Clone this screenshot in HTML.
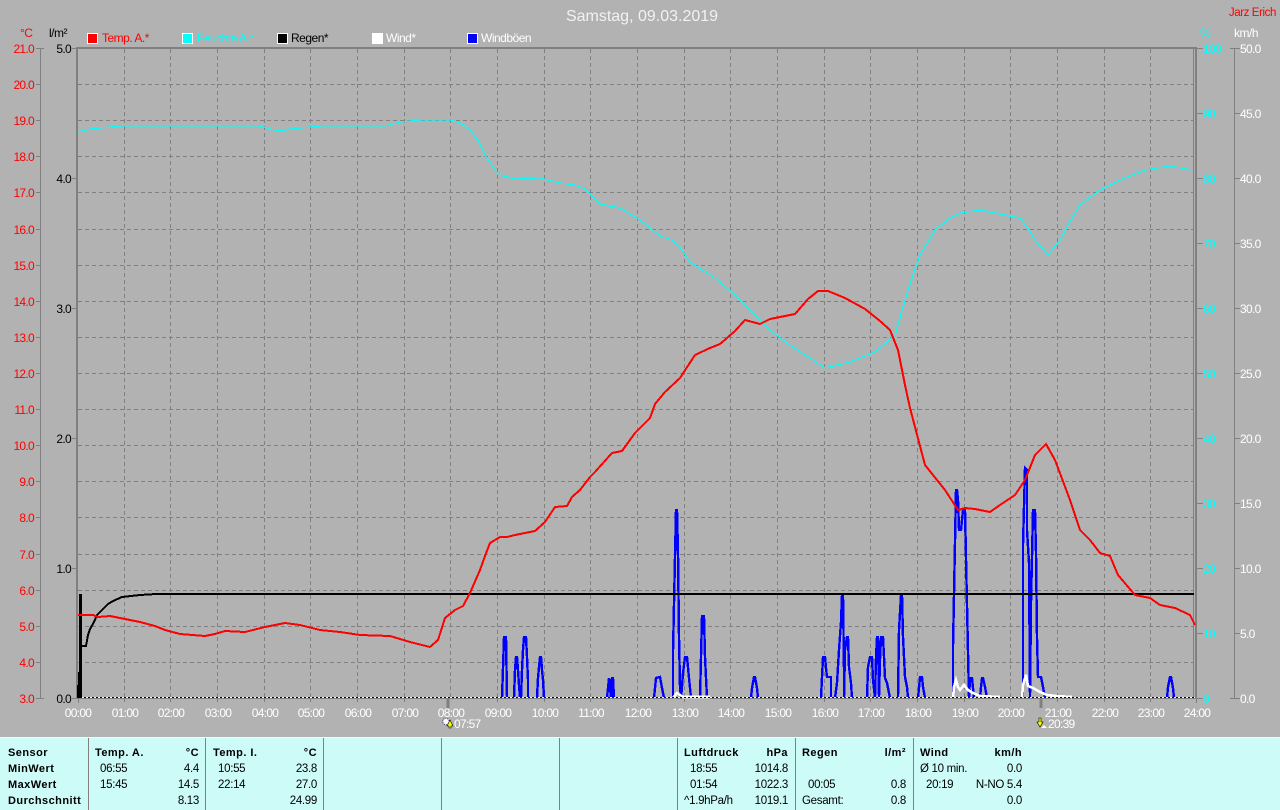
<!DOCTYPE html>
<html><head><meta charset="utf-8"><style>
html,body{margin:0;padding:0;background:#b2b2b2;width:1280px;height:810px;overflow:hidden}
svg{display:block;position:absolute;left:0;top:0}
text{font-family:"Liberation Sans",sans-serif;font-size:12px;letter-spacing:-.7px}
.lg text{letter-spacing:-.5px}
.r{text-anchor:end}.m{text-anchor:middle}
.w{fill:#fff}.red{fill:#f00}.c{fill:#0ff}.k{fill:#000}
.t text{font-size:11.5px;letter-spacing:-.3px;fill:#000}
.t .b{font-weight:bold;font-size:11px;letter-spacing:.45px}
.l{fill:none;stroke-linejoin:miter;shape-rendering:crispEdges}
.g{stroke:#808080;stroke-width:1;stroke-dasharray:4 3;shape-rendering:crispEdges;fill:none}
.a{stroke:#808080;fill:none;shape-rendering:crispEdges}
.bl polyline{fill:none;stroke:#00f;stroke-width:2.4;stroke-linejoin:miter;shape-rendering:crispEdges}
</style></head><body>
<svg width="1280" height="810" viewBox="0 0 1280 810">
<rect width="1280" height="810" fill="#b2b2b2"/>
<text x="642" y="21" class="m" fill="#f2f2f2" style="font-size:16px;letter-spacing:0">Samstag, 09.03.2019</text>
<text x="1276" y="16" class="r red" style="font-size:11.5px;letter-spacing:-.4px">Jarz Erich</text>
<g class="lg">
<text x="20" y="37" class="red">°C</text>
<text x="49" y="37" class="k">l/m²</text>
<text x="1200" y="37" class="c">%</text>
<text x="1234" y="37" class="w">km/h</text>
</g>
<!-- legend -->
<g stroke="#fff" stroke-width="1" shape-rendering="crispEdges">
<rect x="87.5" y="33.5" width="10" height="10" fill="#f00"/>
<rect x="182.5" y="33.5" width="10" height="10" fill="#0ff"/>
<rect x="277.5" y="33.5" width="10" height="10" fill="#000"/>
<rect x="372.5" y="33.5" width="10" height="10" fill="#fff"/>
<rect x="467.5" y="33.5" width="10" height="10" fill="#00f"/>
</g>
<g class="lg">
<text x="102" y="42" class="red">Temp. A.*</text>
<text x="197" y="42" class="c">Feuchte A.*</text>
<text x="291" y="42" class="k">Regen*</text>
<text x="386" y="42" class="w">Wind*</text>
<text x="481" y="42" class="w">Windböen</text>
</g>
<!-- horizontal grid -->
<path class="g" d="M78 84.5H1194M78 120.5H1194M78 156.5H1194M78 192.5H1194M78 229.5H1194M78 265.5H1194M78 301.5H1194M78 337.5H1194M78 373.5H1194M78 409.5H1194M78 445.5H1194M78 481.5H1194M78 517.5H1194M78 554.5H1194M78 590.5H1194M78 626.5H1194M78 662.5H1194"/>
<!-- vertical grid -->
<path class="g" d="M124.5 49V698M170.5 49V698M217.5 49V698M264.5 49V698M310.5 49V698M357.5 49V698M404.5 49V698M450.5 49V698M497.5 49V698M544.5 49V698M590.5 49V698M637.5 49V698M684.5 49V698M730.5 49V698M777.5 49V698M824.5 49V698M870.5 49V698M917.5 49V698M964.5 49V698M1010.5 49V698M1057.5 49V698M1104.5 49V698M1150.5 49V698"/>
<path class="a" d="M1193.5 49V698"/>
<!-- axes -->
<path class="a" stroke-width="2" d="M76 48H1197"/>
<path class="a" stroke-width="2" d="M77 47V699"/>
<path class="a" stroke-width="2" d="M1196 47V699"/>
<path class="a" d="M77 698.5H1197"/>
<path class="a" d="M40.5 48V698M36 48.5H44M36 698.5H44M36 84.5H40M36 120.5H40M36 156.5H40M36 192.5H40M36 229.5H40M36 265.5H40M36 301.5H40M36 337.5H40M36 373.5H40M36 409.5H40M36 445.5H40M36 481.5H40M36 517.5H40M36 554.5H40M36 590.5H40M36 626.5H40M36 662.5H40"/>
<path class="a" d="M72 48.5H77M72 178.5H77M72 308.5H77M72 438.5H77M72 568.5H77M72 698.5H77"/>
<path class="a" d="M1197 48.5H1203M1197 113.5H1203M1197 178.5H1203M1197 243.5H1203M1197 308.5H1203M1197 373.5H1203M1197 438.5H1203M1197 503.5H1203M1197 568.5H1203M1197 633.5H1203M1197 698.5H1203"/>
<path class="a" d="M1234.5 48V698M1230 48.5H1240M1230 698.5H1240M1234 113.5H1240M1234 178.5H1240M1234 243.5H1240M1234 308.5H1240M1234 373.5H1240M1234 438.5H1240M1234 503.5H1240M1234 568.5H1240M1234 633.5H1240"/>
<path class="a" d="M78.5 699V703M124.5 699V702M170.5 699V702M217.5 699V702M264.5 699V702M310.5 699V702M357.5 699V702M404.5 699V702M497.5 699V702M544.5 699V702M590.5 699V702M637.5 699V702M684.5 699V702M730.5 699V702M777.5 699V702M824.5 699V702M870.5 699V702M917.5 699V702M964.5 699V702M1010.5 699V702M1057.5 699V702M1104.5 699V702M1150.5 699V702M1196.5 699V703"/>
<path stroke="#808080" stroke-width="3" d="M448 697V708M1041 697V708" shape-rendering="crispEdges"/>
<!-- left temp labels -->
<g class="red">
<text x="34" y="53" class="r">21.0</text><text x="34" y="89" class="r">20.0</text><text x="34" y="125" class="r">19.0</text><text x="34" y="161" class="r">18.0</text><text x="34" y="197" class="r">17.0</text><text x="34" y="234" class="r">16.0</text><text x="34" y="270" class="r">15.0</text><text x="34" y="306" class="r">14.0</text><text x="34" y="342" class="r">13.0</text><text x="34" y="378" class="r">12.0</text><text x="34" y="414" class="r">11.0</text><text x="34" y="450" class="r">10.0</text><text x="34" y="486" class="r">9.0</text><text x="34" y="522" class="r">8.0</text><text x="34" y="559" class="r">7.0</text><text x="34" y="595" class="r">6.0</text><text x="34" y="631" class="r">5.0</text><text x="34" y="667" class="r">4.0</text><text x="34" y="703" class="r">3.0</text>
</g>
<g class="k">
<text x="71" y="53" class="r">5.0</text><text x="71" y="183" class="r">4.0</text><text x="71" y="313" class="r">3.0</text><text x="71" y="443" class="r">2.0</text><text x="71" y="573" class="r">1.0</text><text x="71" y="703" class="r">0.0</text>
</g>
<g class="c">
<text x="1203" y="53">100</text><text x="1203" y="118">90</text><text x="1203" y="183">80</text><text x="1203" y="248">70</text><text x="1203" y="313">60</text><text x="1203" y="378">50</text><text x="1203" y="443">40</text><text x="1203" y="508">30</text><text x="1203" y="573">20</text><text x="1203" y="638">10</text><text x="1203" y="703">0</text>
</g>
<g class="w">
<text x="1240" y="53">50.0</text><text x="1240" y="118">45.0</text><text x="1240" y="183">40.0</text><text x="1240" y="248">35.0</text><text x="1240" y="313">30.0</text><text x="1240" y="378">25.0</text><text x="1240" y="443">20.0</text><text x="1240" y="508">15.0</text><text x="1240" y="573">10.0</text><text x="1240" y="638">5.0</text><text x="1240" y="703">0.0</text>
</g>
<g class="w">
<text x="78" y="717" class="m">00:00</text><text x="125" y="717" class="m">01:00</text><text x="171" y="717" class="m">02:00</text><text x="218" y="717" class="m">03:00</text><text x="265" y="717" class="m">04:00</text><text x="311" y="717" class="m">05:00</text><text x="358" y="717" class="m">06:00</text><text x="405" y="717" class="m">07:00</text><text x="451" y="717" class="m">08:00</text><text x="498" y="717" class="m">09:00</text><text x="545" y="717" class="m">10:00</text><text x="591" y="717" class="m">11:00</text><text x="638" y="717" class="m">12:00</text><text x="685" y="717" class="m">13:00</text><text x="731" y="717" class="m">14:00</text><text x="778" y="717" class="m">15:00</text><text x="825" y="717" class="m">16:00</text><text x="871" y="717" class="m">17:00</text><text x="918" y="717" class="m">18:00</text><text x="965" y="717" class="m">19:00</text><text x="1011" y="717" class="m">20:00</text><text x="1058" y="717" class="m">21:00</text><text x="1105" y="717" class="m">22:00</text><text x="1151" y="717" class="m">23:00</text><text x="1197" y="717" class="m">24:00</text>
<text x="454" y="728">07:57</text><text x="1048" y="728">20:39</text>
</g>
<!-- sun / moon markers -->
<circle cx="446" cy="721.5" r="3.2" fill="#fff" stroke="#336" stroke-width="1" stroke-dasharray="1 1"/>
<path d="M450 720L453 726H451V728H449V726H447Z" fill="#ff0" stroke="#000" stroke-width=".6"/>
<path d="M1039 718H1041V722H1043L1040 727L1037 722H1039Z" fill="#ff0" stroke="#000" stroke-width=".6"/>
<path d="M1041 728L1044 725L1047 728Z" fill="#fff"/>
<!-- humidity -->
<polyline class="l" stroke="#0ff" stroke-width="1.2" points="78,132 90,129 100,128 120,126 260,126 270,129 280,131 290,129 300,128 320,126 385,126 400,122 420,120 450,120 460,123 470,130 478,140 485,155 495,170 500,175 515,179 540,178 560,183 575,185 585,189 600,204 620,208 640,220 660,236 672,240 680,247 690,262 715,278 735,295 750,310 770,330 790,345 810,358 825,368 850,362 875,352 895,335 905,300 912,278 920,255 935,230 950,218 960,213 980,210 1000,214 1020,218 1028,228 1035,240 1048,255 1060,240 1072,218 1080,205 1100,190 1120,180 1145,170 1170,166 1192,170"/>
<!-- gusts -->
<g class="bl">
<polyline points="502,698 503,668 504,637 506,637 507,698"/>
<polyline points="514,698 515,670 516,657 517,657 518,670 519,685 520,698"/>
<polyline points="521,698 522,670 523,650 524,637 526,637 527,657 528,680 528,698"/>
<polyline points="537,698 538,678 539,667 540,657 541,657 542,670 543,680 544,698"/>
<polyline points="607,698 608,688 609,678 610,688 611,698 612,678 613,678 614,698"/>
<polyline points="654,698 656,678 660,677 662,688 664,698"/>
<polyline points="673,698 673,652 674,604 675,557 676,510 677,510 678,553 679,637 680,687 681,698 682,687 683,673 685,657 687,657 689,678 691,698"/>
<polyline points="700,698 701,657 702,616 704,616 705,657 706,678 707,698"/>
<polyline points="751,698 752,688 754,677 755,677 757,688 758,698"/>
<polyline points="821,698 822,677 823,657 825,657 826,668 827,677 831,677 831,698"/>
<polyline points="835,698 837,683 839,650 841,622 842,595 843,595 844,670 844,698 845,650 847,637 848,637 849,667 851,683 852,698"/>
<polyline points="867,698 868,667 870,657 872,657 873,680 875,698 876,657 877,637 878,637 879,697 880,660 881,637 883,637 884,657 885,678 887,683 890,698"/>
<polyline points="898,698 899,630 901,595 902,595 903,637 905,677 907,687 908,698"/>
<polyline points="918,698 919,688 920,677 922,677 923,687 925,698"/>
<polyline points="953,698 953,647 955,542 956,490 957,490 958,500 959,530 961,530 962,520 963,510 965,510 966,558 967,605 968,652 969,698 970,678 972,678 974,698"/>
<polyline points="980,698 981,687 982,678 983,678 985,687 987,698"/>
<polyline points="1023,698 1023,545 1025,468 1027,470 1027,530 1029,563 1030,698 1031,603 1032,557 1033,510 1035,510 1036,553 1037,637 1038,677 1041,677 1043,687 1045,698"/>
<polyline points="1167,698 1168,687 1170,677 1171,677 1173,688 1174,698"/>
</g>
<!-- wind -->
<polyline class="l" stroke="#fff" stroke-width="2.6" points="673,698 677,693 683,697 710,697"/>
<polyline class="l" stroke="#fff" stroke-width="2.6" points="953,698 954,687 956,680 958,687 960,690 964,685 968,690 973,693 980,696 1000,697"/>
<polyline class="l" stroke="#fff" stroke-width="2.6" points="1022,698 1023,685 1026,675 1028,686 1033,688 1040,692 1047,695 1056,696 1072,697"/>
<!-- baseline -->
<path d="M78 697.5H1195" stroke="#000" stroke-width="1" shape-rendering="crispEdges"/>
<path d="M78 697.5H1195" stroke="#fff" stroke-width="1" stroke-dasharray="2 2" shape-rendering="crispEdges"/>
<!-- rain -->
<rect x="77" y="685" width="2" height="13" fill="#000"/>
<rect x="78" y="672" width="2" height="26" fill="#000"/>
<rect x="79" y="594" width="3" height="104" fill="#000"/>
<polyline class="l" stroke="#000" stroke-width="2" points="82,646 86,646 88,635 90,629 94,622 97,615 102,610 108,604 113,601 122,597 140,595 156,594 1194,594"/>
<!-- temp -->
<polyline class="l" stroke="#f00" stroke-width="2" points="78,615 93,615 98,617 110,616 120,618 140,622 155,626 165,630 180,634 205,636 215,634 225,631 245,632 265,627 285,623 300,625 320,630 340,632 360,635 390,636 410,642 430,647 438,640 445,618 455,610 463,606 470,593 480,570 485,556 490,543 500,537 507,537 515,535 535,531 545,522 555,507 567,506 572,497 580,490 590,477 595,472 612,453 622,451 635,433 650,418 655,404 665,392 680,378 695,355 710,348 720,344 735,331 745,320 760,324 770,319 795,314 808,299 818,291 828,291 845,298 865,309 880,321 890,330 898,350 905,385 910,408 925,465 945,490 958,510 965,508 975,509 990,512 1000,505 1015,495 1025,480 1035,455 1046,444 1055,460 1070,500 1080,530 1090,540 1100,553 1110,556 1118,575 1135,595 1150,598 1160,605 1175,608 1190,615 1195,625"/>
<!-- table -->
<rect x="0" y="737" width="1280" height="73" fill="#ccfbf8"/>
<path d="M0 737.5H1280" stroke="#eafdfb" shape-rendering="crispEdges"/>
<path d="M88.5 738V810M205.5 738V810M323.5 738V810M441.5 738V810M559.5 738V810M677.5 738V810M795.5 738V810M913.5 738V810" stroke="#808080" shape-rendering="crispEdges"/>
<g class="t">
<text x="8" y="756" class="b">Sensor</text><text x="8" y="772" class="b">MinWert</text><text x="8" y="788" class="b">MaxWert</text><text x="8" y="804" class="b">Durchschnitt</text>
<text x="95" y="756" class="b">Temp. A.</text><text x="199" y="756" class="b r">°C</text>
<text x="100" y="772">06:55</text><text x="199" y="772" class="r">4.4</text>
<text x="100" y="788">15:45</text><text x="199" y="788" class="r">14.5</text>
<text x="199" y="804" class="r">8.13</text>
<text x="213" y="756" class="b">Temp. I.</text><text x="317" y="756" class="b r">°C</text>
<text x="218" y="772">10:55</text><text x="317" y="772" class="r">23.8</text>
<text x="218" y="788">22:14</text><text x="317" y="788" class="r">27.0</text>
<text x="317" y="804" class="r">24.99</text>
<text x="684" y="756" class="b">Luftdruck</text><text x="788" y="756" class="b r">hPa</text>
<text x="690" y="772">18:55</text><text x="788" y="772" class="r">1014.8</text>
<text x="690" y="788">01:54</text><text x="788" y="788" class="r">1022.3</text>
<text x="684" y="804">^1.9hPa/h</text><text x="788" y="804" class="r">1019.1</text>
<text x="802" y="756" class="b">Regen</text><text x="906" y="756" class="b r">l/m²</text>
<text x="808" y="788">00:05</text><text x="906" y="788" class="r">0.8</text>
<text x="802" y="804">Gesamt:</text><text x="906" y="804" class="r">0.8</text>
<text x="920" y="756" class="b">Wind</text><text x="1022" y="756" class="b r">km/h</text>
<text x="920" y="772">Ø 10 min.</text><text x="1022" y="772" class="r">0.0</text>
<text x="926" y="788">20:19</text><text x="1022" y="788" class="r">N-NO 5.4</text>
<text x="1022" y="804" class="r">0.0</text>
</g>
</svg>
</body></html>
